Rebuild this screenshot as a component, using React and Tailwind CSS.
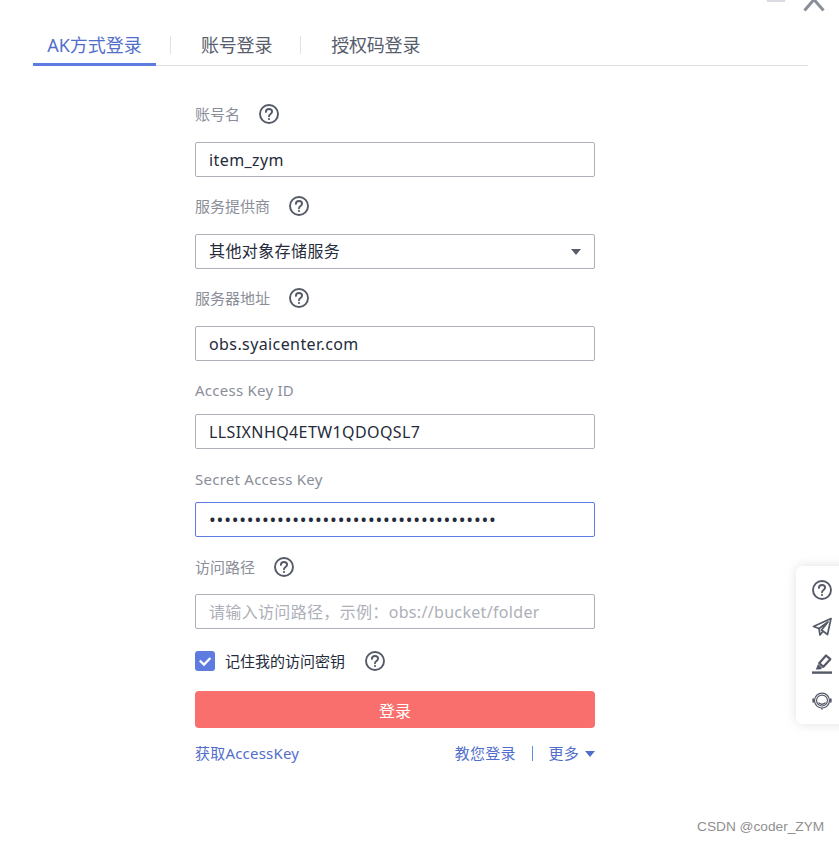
import React from "react";

const FONT = "font-['Noto_Sans','Noto_Sans_CJK_SC',sans-serif]";

function HelpIcon({ className = "" }) {
  return (
    <svg viewBox="0 0 20 20" className={"w-5 h-5 shrink-0 " + className} fill="none" stroke="#555a68" strokeWidth="1.9">
      <circle cx="10" cy="10" r="9" />
      <path d="M6.9 7.9c0-1.8 1.3-2.9 3.1-2.9s3.1 1.1 3.1 2.6c0 2.4-3.1 2.3-3.1 4.6" strokeLinecap="round" />
      <circle cx="10" cy="15" r="1.1" fill="#555a68" stroke="none" />
    </svg>
  );
}

function Label({ text, gap, help = true, className = "" }) {
  return (
    <div className={"flex items-center h-5 text-[15px] text-[#8a8e99] " + className}>
      <span>{text}</span>
      {help && <HelpIcon className={gap} />}
    </div>
  );
}

function Field({ children, focused }) {
  return (
    <div
      className={
        "flex items-center h-[35px] px-[13px] rounded-[2px] border text-[16px] tracking-[0.4px] text-[#252b3a] bg-white " +
        (focused ? "border-[#5e7ce0]" : "border-[#adb0b8]")
      }
    >
      {children}
    </div>
  );
}

export default function App() {
  return (
    <div className={"relative w-[839px] h-[844px] overflow-hidden bg-white " + FONT}>
      {/* window controls, cut off by the top edge */}
      <div className="absolute left-[767px] top-0 w-[18px] h-[2px] bg-[#d9dbe0]" />
      <svg viewBox="0 0 22 12" className="absolute left-[803px] top-0 w-[22px] h-[12px]" fill="none" stroke="#8a8e99" strokeWidth="3">
        <path d="M1.5 10.5 L11 -0.5 L20.5 10.5" />
      </svg>

      {/* tabs */}
      <div className="pt-[25px] pl-[33px] pr-[31px]">
        <div className="flex items-center h-[41px] border-b border-[#dfe1e6]">
          <div className="relative flex items-center justify-center w-[123px] h-full text-[18px] text-[#526ecc]">
            AK方式登录
            <div className="absolute left-0 right-0 -bottom-px h-[3px] bg-[#5e7ce0]" />
          </div>
          <div className="ml-[14px] w-px h-[18px] bg-[#dfe1e6]" />
          <div className="ml-[30px] text-[18px] tracking-[-0.2px] text-[#575d6c]">账号登录</div>
          <div className="ml-[28px] w-px h-[18px] bg-[#dfe1e6]" />
          <div className="ml-[30px] text-[18px] tracking-[-0.2px] text-[#575d6c]">授权码登录</div>
        </div>
      </div>

      {/* form */}
      <div className="ml-[195px] mt-[38px] w-[400px]">
        <Label text="账号名" gap="ml-[19px]" className="mb-[18px]" />
        <Field>item_zym</Field>

        <Label text="服务提供商" gap="ml-[19px]" className="mt-[19px] mb-[18px]" />
        <Field>
          <span className="flex-1 -mt-px">其他对象存储服务</span>
          <span className="w-0 h-0 border-x-[5px] border-x-transparent border-t-[6px] border-t-[#575d6c]" />
        </Field>

        <Label text="服务器地址" gap="ml-[19px]" className="mt-[19px] mb-[18px]" />
        <Field>obs.syaicenter.com</Field>

        <Label text="Access Key ID" help={false} className="mt-[19px] mb-[14px] tracking-[0.25px]" />
        <Field>LLSIXNHQ4ETW1QDOQSL7</Field>

        <Label text="Secret Access Key" help={false} className="mt-[20px] mb-[13px] tracking-[0.25px]" />
        <Field focused>
          <span className="text-[18px] tracking-[0.8px]">{"•".repeat(38)}</span>
        </Field>

        <Label text="访问路径" gap="ml-[19px]" className="mt-[20px] mb-[17px]" />
        <Field>
          <span className="text-[#adb0b8] tracking-[0.33px]">请输入访问路径，示例：obs://bucket/folder</span>
        </Field>

        <div className="flex items-center h-5 mt-[22px] text-[15px] text-[#252b3a]">
          <span className="flex items-center justify-center w-5 h-5 rounded-[3px] bg-[#5e7ce0]">
            <svg viewBox="0 0 20 20" className="w-5 h-5" fill="none" stroke="#fff" strokeWidth="2.2">
              <path d="M4.8 9.6 L9 13.6 L15.4 7" />
            </svg>
          </span>
          <span className="ml-[10px]">记住我的访问密钥</span>
          <HelpIcon className="ml-[20px]" />
        </div>

        <button className="block w-full h-[37px] mt-[20px] pt-[2px] rounded-[4px] bg-[#f86f6d] text-white text-[16px]">
          登录
        </button>

        <div className="flex items-center h-5 mt-[15px] text-[15px] tracking-[0.2px] text-[#526ecc]">
          <span>获取AccessKey</span>
          <span className="ml-auto">教您登录</span>
          <div className="ml-4 w-px h-[15px] bg-[#5e8fe0]" />
          <span className="ml-4">更多</span>
          <span className="ml-[6px] mt-[2px] w-0 h-0 border-x-[5.5px] border-x-transparent border-t-[6px] border-t-[#526ecc]" />
        </div>
      </div>

      {/* floating tool panel */}
      <div className="absolute left-[796px] top-[566px] w-[60px] h-[158px] rounded-[6px] bg-white shadow-[0_0_12px_rgba(0,0,0,0.12)] flex flex-col gap-[17px] pt-[14px] pl-4">
        <HelpIcon />
        <svg viewBox="0 0 20 20" className="w-5 h-5" fill="none" stroke="#555a68" strokeWidth="1.7" strokeLinejoin="round">
          <path d="M19 1.5 L1.5 9.5 L7 11.5 L16 5 L9.5 13 L15.5 17.5 Z" />
          <path d="M7 11.5 L8 18 L11 14.2" />
        </svg>
        <svg viewBox="0 0 20 20" className="w-5 h-5" fill="none" stroke="#555a68">
          <path d="M14 1.5 L18.3 5.2 L11.4 12.8 L7.2 9.2 Z" strokeWidth="2.2" strokeLinejoin="round" />
          <path d="M6 10 L10.4 14 L8 15.5 L3.8 15.5 Z" fill="#555a68" stroke="none" />
          <rect x="0" y="17.4" width="20" height="2.4" fill="#555a68" stroke="none" />
        </svg>
        <svg viewBox="0 0 22 22" className="w-5 h-5" fill="none" stroke="#555a68" strokeWidth="1.3">
          <circle cx="11" cy="10.5" r="8.2" />
          <circle cx="11" cy="10.5" r="6" />
          <path d="M7.6 13.2c1.9 1.5 4.9 1.5 6.8 0" strokeWidth="1.6" strokeLinecap="round" />
          <rect x="0.4" y="8" width="2.2" height="5" rx="1.1" fill="#555a68" stroke="none" />
          <rect x="19.4" y="8" width="2.2" height="5" rx="1.1" fill="#555a68" stroke="none" />
          <path d="M11 18.5v2" />
        </svg>
      </div>

      {/* watermark */}
      <div className="absolute left-[697px] top-[818px] text-[13.7px] leading-[18px] text-[#8f8f8f] font-['Liberation_Sans',sans-serif]">
        CSDN @coder_ZYM
      </div>
    </div>
  );
}
